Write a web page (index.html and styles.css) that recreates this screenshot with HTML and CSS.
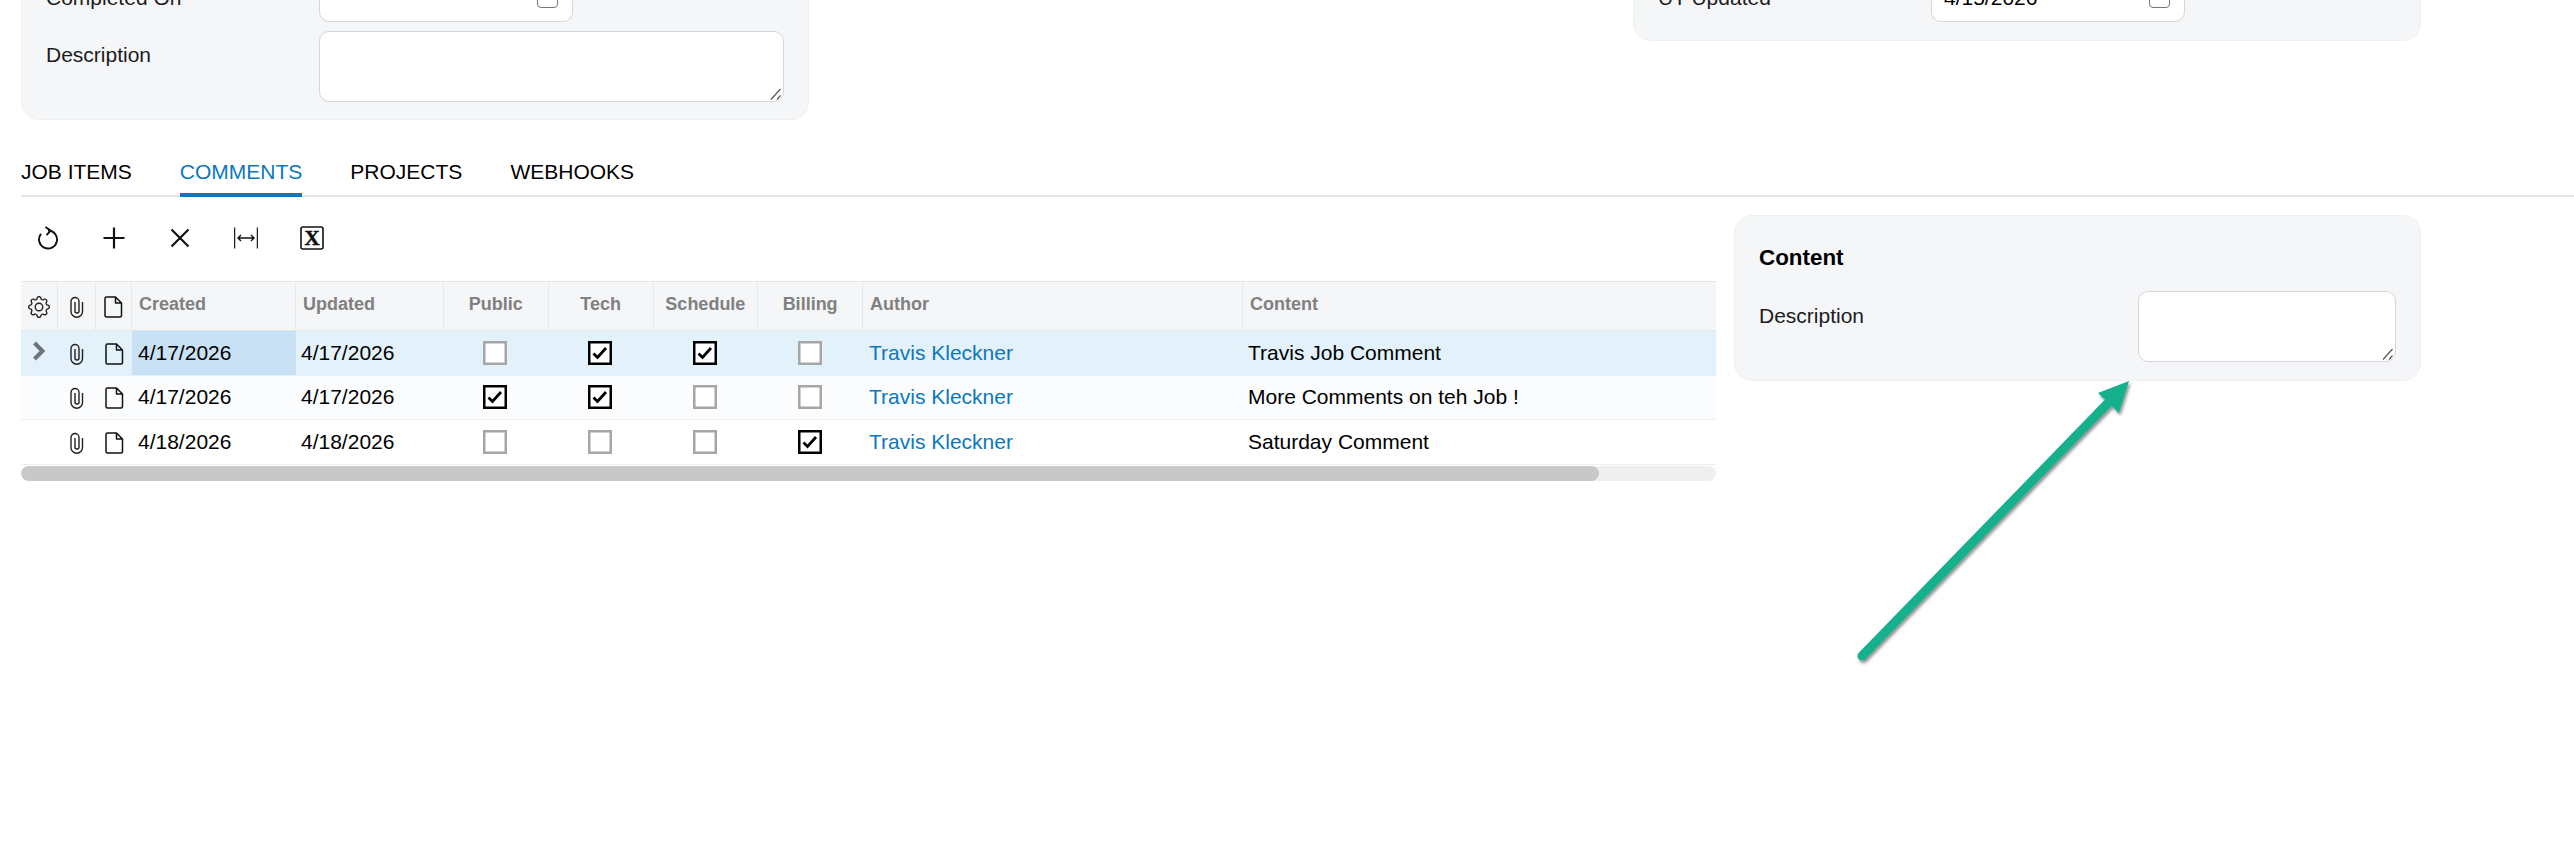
FILE: index.html
```html
<!DOCTYPE html>
<html lang="en">
<head>
<meta charset="utf-8">
<title>Job comments</title>
<link rel="stylesheet" href="styles.css">
</head>
<body>
<svg width="0" height="0" class="defs" aria-hidden="true">
  <symbol id="clip" viewBox="0 0 14 22"><path d="M12.500 6V15.500a5.750 5.750 0 0 1-11.500 0V5.500a4 4 0 0 1 8 0V15a2 2 0 0 1-4 0V6" fill="none" stroke="currentColor" stroke-width="1.400"/></symbol>
  <symbol id="doc" viewBox="0 0 19 22"><path d="M2.500 1h9l6 6v12.500a1.500 1.500 0 0 1-1.500 1.500H2.500a1.500 1.500 0 0 1-1.500-1.500V2.500A1.500 1.500 0 0 1 2.500 1zM11.500 1v6h6" fill="none" stroke="currentColor" stroke-width="1.500" stroke-linejoin="round"/></symbol>
  <symbol id="chk" viewBox="0 0 24 24"><rect x="1.250" y="1.250" width="21.500" height="21.500" fill="#fff" stroke="#000" stroke-width="2.500"/><path d="M5.500 12.500l4 4 8.500-9.500" fill="none" stroke="#000" stroke-width="2.800"/></symbol>
  <symbol id="box" viewBox="0 0 24 24"><rect x="1.250" y="1.250" width="21.500" height="21.500" fill="#fff" stroke="#a6a6a6" stroke-width="2.500"/></symbol>
</svg>
<div class="page">
  <div class="top">
    <section class="panel panel-left">
      <div class="field"><label class="lbl lbl-short">Completed On</label><div class="input"><span class="cal"></span></div></div>
      <div class="field"><label class="lbl">Description</label><div class="area"><svg class="grip" viewBox="0 0 12 12"><path d="M1 11.500L10.500 1M7 11.500l3.500-4" stroke="#555" stroke-width="1.200" fill="none"/></svg></div></div>
    </section>
    <section class="panel panel-right">
      <div class="field"><label class="lbl lbl-short">UT Updated</label><div class="input"><span class="val">4/15/2026</span><span class="cal"></span></div></div>
    </section>
  </div>
  <nav class="tabs">
    <a class="tab">JOB ITEMS</a>
    <a class="tab active">COMMENTS</a>
    <a class="tab">PROJECTS</a>
    <a class="tab">WEBHOOKS</a>
  </nav>
  <div class="main">
    <div class="left">
      <div class="toolbar">
        <svg class="tool" viewBox="0 0 24 24"><path d="M12 4.500a9 9 0 1 1-7 3.400" fill="none" stroke="#111" stroke-width="1.900"/><path d="M9.500 1l5.200 3.700-4.200 4.500" fill="none" stroke="#111" stroke-width="1.900"/></svg>
        <svg class="tool" viewBox="0 0 24 24"><path d="M12 1.500v21M1.500 12h21" stroke="#111" stroke-width="2.200"/></svg>
        <svg class="tool" viewBox="0 0 24 24"><path d="M3.500 3.500l17 17M20.500 3.500l-17 17" stroke="#111" stroke-width="2.200"/></svg>
        <svg class="tool" viewBox="0 0 24 24"><path d="M0.500 1.500v21M23.500 1.500v21" stroke="#2a1c22" stroke-width="1.500"/><path d="M4 12h16M7 9l-3 3 3 3M17 9l3 3-3 3" fill="none" stroke="#111" stroke-width="1.400"/></svg>
        <svg class="tool" viewBox="0 0 24 24"><rect x="1" y="1" width="22" height="22" rx="2" fill="none" stroke="#111" stroke-width="1.600"/><text class="xl" x="12" y="18.500" text-anchor="middle">X</text></svg>
      </div>
      <table class="grid">
        <colgroup>
          <col class="c-a"><col class="c-b"><col class="c-c"><col class="c-created"><col class="c-updated">
          <col class="c-flag"><col class="c-flag"><col class="c-flag"><col class="c-flag"><col class="c-author"><col class="c-content">
        </colgroup>
        <thead>
          <tr>
            <th class="ic"><svg class="gear" viewBox="0 0 16 16"><path fill="#222" d="M8 4.754a3.246 3.246 0 1 0 0 6.492 3.246 3.246 0 0 0 0-6.492zM5.754 8a2.246 2.246 0 1 1 4.492 0 2.246 2.246 0 0 1-4.492 0z"/><path fill="#222" d="M9.796 1.343c-.527-1.79-3.065-1.79-3.592 0l-.094.319a.873.873 0 0 1-1.255.52l-.292-.16c-1.64-.892-3.433.902-2.54 2.541l.159.292a.873.873 0 0 1-.52 1.255l-.319.094c-1.79.527-1.79 3.065 0 3.592l.319.094a.873.873 0 0 1 .52 1.255l-.16.292c-.892 1.64.901 3.434 2.541 2.54l.292-.159a.873.873 0 0 1 1.255.52l.094.319c.527 1.79 3.065 1.79 3.592 0l.094-.319a.873.873 0 0 1 1.255-.52l.292.16c1.64.893 3.434-.902 2.54-2.541l-.159-.292a.873.873 0 0 1 .52-1.255l.319-.094c1.79-.527 1.79-3.065 0-3.592l-.319-.094a.873.873 0 0 1-.52-1.255l.16-.292c.893-1.64-.902-3.433-2.541-2.54l-.292.159a.873.873 0 0 1-1.255-.52l-.094-.319zm-2.633.283c.246-.835 1.428-.835 1.674 0l.094.319a1.873 1.873 0 0 0 2.693 1.115l.291-.16c.764-.415 1.6.42 1.184 1.185l-.159.292a1.873 1.873 0 0 0 1.116 2.692l.318.094c.835.246.835 1.428 0 1.674l-.319.094a1.873 1.873 0 0 0-1.115 2.693l.16.291c.415.764-.42 1.6-1.185 1.184l-.291-.159a1.873 1.873 0 0 0-2.693 1.116l-.094.318c-.246.835-1.428.835-1.674 0l-.094-.319a1.873 1.873 0 0 0-2.692-1.115l-.292.16c-.764.415-1.6-.42-1.184-1.185l.159-.291A1.873 1.873 0 0 0 1.945 8.93l-.319-.094c-.835-.246-.835-1.428 0-1.674l.319-.094A1.873 1.873 0 0 0 3.06 4.377l-.16-.292c-.415-.764.42-1.6 1.185-1.184l.292.159a1.873 1.873 0 0 0 2.692-1.115l.094-.319z"/></svg></th>
            <th class="ic"><svg class="clip"><use href="#clip"/></svg></th>
            <th class="ic"><svg class="doc"><use href="#doc"/></svg></th>
            <th>Created</th><th>Updated</th>
            <th class="mid">Public</th><th class="mid">Tech</th><th class="mid">Schedule</th><th class="mid">Billing</th>
            <th>Author</th><th>Content</th>
          </tr>
        </thead>
        <tbody>
          <tr class="sel">
            <td class="ic"><svg class="arrow" viewBox="0 0 14 20"><path d="M2.500 2l8 8-8 8" fill="none" stroke="#6e7378" stroke-width="4"/></svg></td>
            <td class="ic"><svg class="clip"><use href="#clip"/></svg></td>
            <td class="ic"><svg class="doc"><use href="#doc"/></svg></td>
            <td class="date">4/17/2026</td><td>4/17/2026</td>
            <td class="mid"><svg class="cb"><use href="#box"/></svg></td>
            <td class="mid"><svg class="cb"><use href="#chk"/></svg></td>
            <td class="mid"><svg class="cb"><use href="#chk"/></svg></td>
            <td class="mid"><svg class="cb"><use href="#box"/></svg></td>
            <td class="who"><a class="link">Travis Kleckner</a></td><td>Travis Job Comment</td>
          </tr>
          <tr class="alt">
            <td class="ic"></td>
            <td class="ic"><svg class="clip"><use href="#clip"/></svg></td>
            <td class="ic"><svg class="doc"><use href="#doc"/></svg></td>
            <td class="date">4/17/2026</td><td>4/17/2026</td>
            <td class="mid"><svg class="cb"><use href="#chk"/></svg></td>
            <td class="mid"><svg class="cb"><use href="#chk"/></svg></td>
            <td class="mid"><svg class="cb"><use href="#box"/></svg></td>
            <td class="mid"><svg class="cb"><use href="#box"/></svg></td>
            <td class="who"><a class="link">Travis Kleckner</a></td><td>More Comments on teh Job !</td>
          </tr>
          <tr>
            <td class="ic"></td>
            <td class="ic"><svg class="clip"><use href="#clip"/></svg></td>
            <td class="ic"><svg class="doc"><use href="#doc"/></svg></td>
            <td class="date">4/18/2026</td><td>4/18/2026</td>
            <td class="mid"><svg class="cb"><use href="#box"/></svg></td>
            <td class="mid"><svg class="cb"><use href="#box"/></svg></td>
            <td class="mid"><svg class="cb"><use href="#box"/></svg></td>
            <td class="mid"><svg class="cb"><use href="#chk"/></svg></td>
            <td class="who"><a class="link">Travis Kleckner</a></td><td>Saturday Comment</td>
          </tr>
        </tbody>
      </table>
      <div class="scroll"><div class="thumb"></div></div>
    </div>
    <section class="panel panel-content">
      <h3 class="heading">Content</h3>
      <div class="field"><label class="lbl lbl-wide">Description</label><div class="area area-small"><svg class="grip" viewBox="0 0 12 12"><path d="M1 11.500L10.500 1M7 11.500l3.500-4" stroke="#555" stroke-width="1.200" fill="none"/></svg></div></div>
    </section>
  </div>
</div>
<svg class="callout" viewBox="0 0 2574 862" aria-hidden="true">
  <defs><filter id="sh" x="-10%" y="-10%" width="120%" height="120%"><feDropShadow dx="1.500" dy="2.500" stdDeviation="1.800" flood-color="#000" flood-opacity=".45"/></filter></defs>
  <g filter="url(#sh)">
    <path d="M1862 656L2108 403" stroke="#13b08c" stroke-width="9" stroke-linecap="round" fill="none"/>
    <path d="M2129 381L2098 393L2119 413z" fill="#13b08c"/>
  </g>
</svg>
</body>
</html>
```
FILE: styles.css
```css
* { box-sizing: border-box; }
html, body { margin: 0; padding: 0; background: #fff; overflow: hidden; }
body { width: 2574px; height: 862px; position: relative; font-family: "Liberation Sans", Arial, sans-serif; font-size: 21px; color: #000; }
.defs { position: absolute; }
.page { margin-top: -41px; }

.top { display: flex; align-items: flex-start; padding-left: 21px; height: 161px; }
.panel { background: #f5f6f8; border: 1px solid #eef0f2; border-radius: 18px; }
.panel-left { width: 788px; height: 161px; padding: 18px 24px 0; display: flex; flex-direction: column; gap: 9px; }
.panel-right { width: 788px; height: 82px; margin-left: 824px; padding: 18px 24px 0; }
.field { display: flex; align-items: flex-start; }
.lbl { width: 273px; flex: none; line-height: 24px; padding-top: 12px; color: #1c1c1c; }
.lbl-short { padding-top: 8px; }
.input { width: 254px; height: 44px; background: #fff; border: 1.500px solid #d4d6d9; border-radius: 10px; display: flex; align-items: center; padding: 0 14px 0 12px; }
.val { line-height: 24px; padding-bottom: 4px; }
.cal { width: 21px; height: 24px; border: 1.500px solid #777; border-radius: 4px; margin-left: auto; margin-bottom: 8px; background: #fff; }
.area { width: 465px; height: 71px; background: #fff; border: 1.500px solid #d4d6d9; border-radius: 10px; position: relative; }
.grip { position: absolute; right: 1px; bottom: 1px; width: 12px; height: 12px; }

.tabs { display: flex; gap: 48px; margin-left: 21px; height: 41px; margin-top: 36px; border-bottom: 2px solid #e3e5e7; }
.tab { line-height: 32px; height: 41px; color: #000; }
.tab.active { color: #0a78bf; border-bottom: 4px solid #0a78bf; border-radius: 4px 4px 0 0; }

.main { display: flex; align-items: flex-start; padding-left: 21px; gap: 18px; }
.left { width: 1695px; flex: none; }
.toolbar { height: 84px; display: flex; align-items: flex-start; padding: 29px 0 0 15px; gap: 42px; }
.tool { width: 24px; height: 24px; flex: none; }
.xl { font-family: "Liberation Serif", serif; font-weight: 700; font-size: 21px; fill: #111; stroke: #111; stroke-width: .5px; }

.grid { border-collapse: separate; border-spacing: 0; table-layout: fixed; width: 1695px; }
.c-a { width: 37px; } .c-b { width: 38px; } .c-c { width: 36px; }
.c-created { width: 164px; } .c-updated { width: 148px; }
.c-flag { width: 104.750px; }
.c-author { width: 380px; } .c-content { width: 473px; }
th { height: 50px; background: #f5f6f7; border-top: 1px solid #e4e6e8; border-bottom: 1px solid #e4e6e8; border-right: 1px solid #e6e8ea; font-size: 18px; font-weight: 700; color: #808080; text-align: left; padding: 0 7px 3px; vertical-align: middle; }
th:last-child { border-right: 0; }
td { height: 44.500px; padding: 0 5px; font-size: 21px; border-bottom: 1px solid #e8f0f4; vertical-align: middle; white-space: nowrap; }
td.date, td.who { padding-left: 6px; }
th.mid, td.mid { text-align: center; padding: 0 0 3px; }
td.mid { padding: 0 2px 0 0; }
th.ic, td.ic { text-align: center; padding: 0; }
tr.sel td { background: #e3f1fa; border-bottom-color: #e3f1fa; }
tr.sel td.date { background: #c8e1f4; }
tr.alt td { background: #fafcfe; }
.link { color: #0a78bf; }
.clip { width: 14px; height: 22px; display: block; margin: 2px auto 0; color: #222; }
.doc { width: 19px; height: 22px; display: block; margin: 2px auto 0; color: #111; }
.gear { width: 22px; height: 22px; display: block; margin: 2px auto 0; }
.arrow { width: 14px; height: 20px; display: block; margin: -4px 0 0 11px; }
.cb { width: 24px; height: 24px; display: block; margin: 0 auto; }

.scroll { height: 15px; margin-top: 1px; background: #efefef; border-radius: 8px; overflow: hidden; }
.thumb { width: 1578px; height: 15px; background: #c8c8c8; border-radius: 8px; }

.panel-content { width: 687px; height: 166px; margin-top: 18px; padding: 29px 24px 0; }
.heading { margin: 0; font-size: 22.400px; font-weight: 700; line-height: 26px; }
.lbl-wide { width: 379px; padding-top: 13px; }
.panel-content .field { margin-top: 20px; }
.area-small { width: 258px; }

.callout { position: absolute; left: 0; top: 0; width: 2574px; height: 862px; pointer-events: none; }
```
